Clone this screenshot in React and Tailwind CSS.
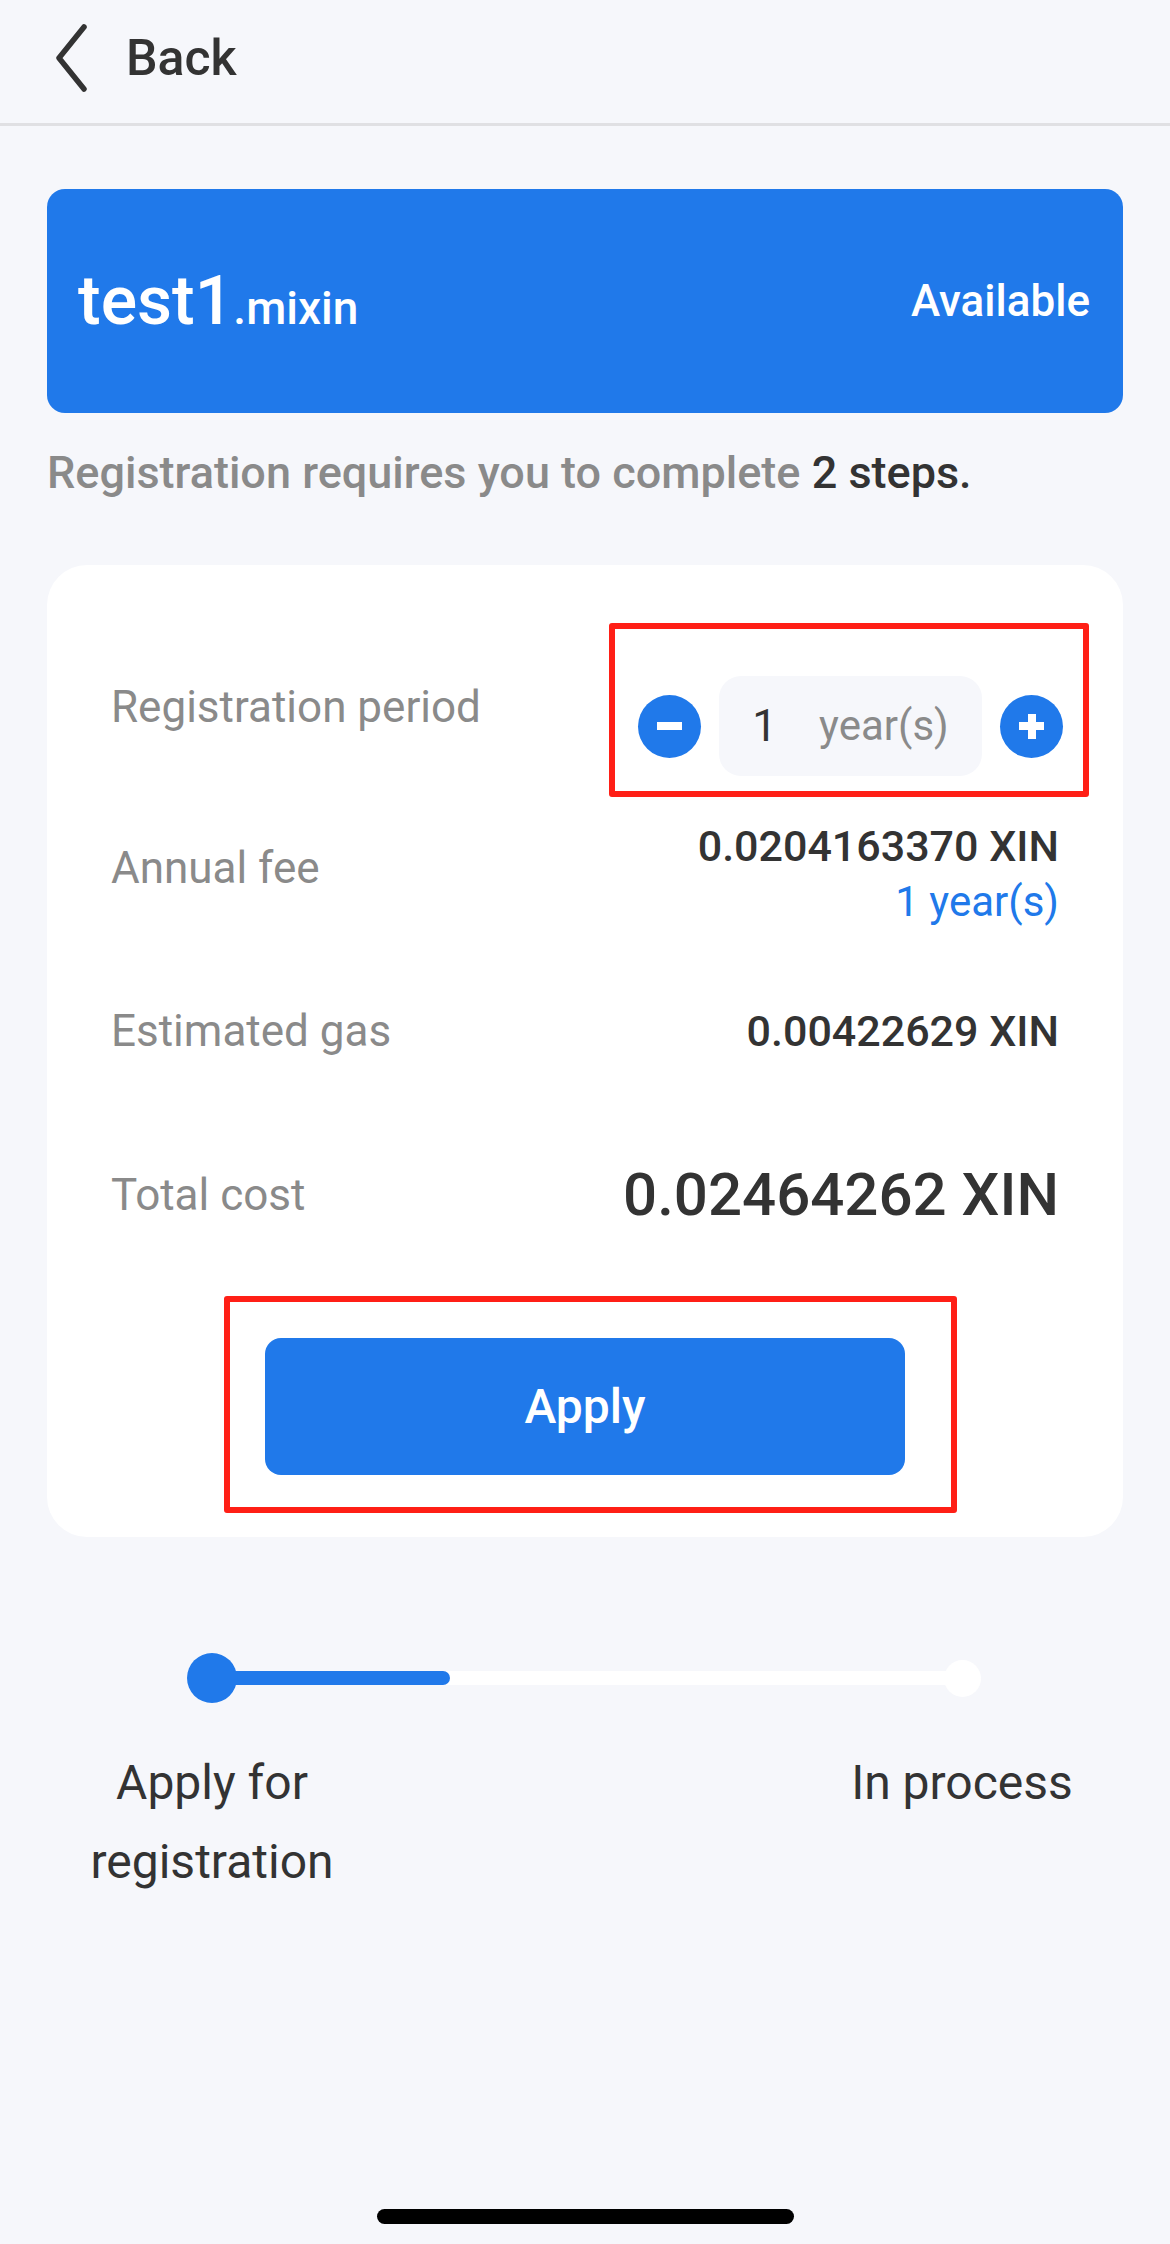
import React, { useState } from 'react';

const font = { fontFamily: 'Roboto, "Noto Sans", sans-serif' };

function Stepper({ years, setYears }) {
    return (
        <div className="relative flex items-center gap-[18px] mr-[-4px]">
            {/* annotation frame */}
            <div className="absolute top-[-53px] left-[-29px] right-[-26px] bottom-[-21px] border-[6px] border-[#ff1f16] rounded-[3px] pointer-events-none"></div>
            <button
                onClick={() => setYears(Math.max(1, years - 1))}
                className="w-[63px] h-[63px] rounded-full bg-[#2079ea] flex items-center justify-center"
            >
                <span className="block w-[25px] h-[8px] bg-white"></span>
            </button>
            <div className="w-[263px] h-[100px] rounded-[22px] bg-[#f6f7fb] flex items-center justify-center gap-[42px]">
                <span className="text-[44px] leading-none text-[#333]">{years}</span>
                <span className="text-[42px] leading-none text-[#8a8a8a]">year(s)</span>
            </div>
            <button
                onClick={() => setYears(years + 1)}
                className="relative w-[63px] h-[63px] rounded-full bg-[#2079ea] flex items-center justify-center"
            >
                <span className="block w-[25px] h-[8px] bg-white"></span>
                <span className="absolute block w-[8px] h-[25px] bg-white"></span>
            </button>
        </div>
    );
}

export default function App() {
    const [years, setYears] = useState(1);

    return (
        <div className="min-h-[2244px] w-[1170px] bg-[#f6f7fb] flex flex-col" style={font}>
            {/* Header */}
            <div className="h-[126px] border-b-[3px] border-[#e0e0e3] flex items-center pl-[54px] pb-[8px]">
                <svg width="36" height="68" viewBox="0 0 36 68" fill="none">
                    <path d="M30 3 L5 34 L30 65" stroke="#333" strokeWidth="5.5" strokeLinecap="round" strokeLinejoin="round" />
                </svg>
                <span className="ml-[36px] text-[50px] leading-none font-medium text-[#333]">Back</span>
            </div>

            {/* Name card */}
            <div className="mx-[47px] mt-[63px] h-[224px] rounded-[18px] bg-[#2079ea] flex items-center justify-between pl-[31px] pr-[33px]">
                <div className="flex items-baseline text-white font-medium">
                    <span className="text-[68px] leading-none">test1</span>
                    <span className="text-[46px] leading-none">.mixin</span>
                </div>
                <span className="text-[44px] leading-none font-medium text-white">Available</span>
            </div>

            <p className="mx-[47px] mt-[36px] text-[45px] leading-[48px] font-medium text-[#8a8a8a]">
                Registration requires you to complete <span className="text-[#333]">2 steps.</span>
            </p>

            {/* Fee card */}
            <div className="mx-[47px] mt-[68px] rounded-[40px] bg-white px-[64px] pt-[111px] pb-[62px]">
                <div className="flex justify-between items-start">
                    <span className="mt-[11px] text-[44px] leading-[40px] text-[#8a8a8a]">Registration period</span>
                    <Stepper years={years} setYears={setYears} />
                </div>

                <div className="mt-[46px] flex justify-between items-start">
                    <span className="mt-[22px] text-[44px] leading-[48px] text-[#8a8a8a]">Annual fee</span>
                    <div className="flex flex-col items-end">
                        <span className="text-[43px] leading-[48px] font-medium text-[#333]">0.0204163370 XIN</span>
                        <span className="mt-[8px] text-[42px] leading-[48px] text-[#2079ea]">{years} year(s)</span>
                    </div>
                </div>

                <div className="mt-[81px] flex justify-between items-center">
                    <span className="text-[44px] leading-[48px] text-[#8a8a8a]">Estimated gas</span>
                    <span className="text-[43px] leading-[48px] font-medium text-[#333]">0.00422629 XIN</span>
                </div>

                <div className="mt-[104px] flex justify-between items-center">
                    <span className="text-[44px] leading-[48px] text-[#8a8a8a]">Total cost</span>
                    <span className="text-[60px] leading-[72px] font-medium text-[#333]">0.02464262 XIN</span>
                </div>

                <div className="mt-[107px] flex justify-center">
                    <div className="relative">
                        <div className="absolute top-[-42px] left-[-41px] right-[-52px] bottom-[-38px] border-[6px] border-[#ff1f16] rounded-[3px] pointer-events-none"></div>
                        <button className="w-[640px] h-[137px] rounded-[16px] bg-[#2079ea] text-white text-[48px] font-medium">
                            Apply
                        </button>
                    </div>
                </div>
            </div>

            {/* Progress */}
            <div className="mt-[116px] ml-[187px] w-[794px] h-[50px] flex items-center">
                <div className="w-[50px] h-[50px] rounded-full bg-[#2079ea] shrink-0"></div>
                <div className="flex-1 h-[14px] bg-white ml-[-4px] mr-[-4px]">
                    <div className="w-[217px] h-full bg-[#2079ea] rounded-r-full"></div>
                </div>
                <div className="w-[37px] h-[37px] rounded-full bg-white shrink-0"></div>
            </div>
            <div className="mt-[40px] ml-[62px] w-[1050px] flex justify-between">
                <span className="w-[300px] text-center text-[48px] leading-[79px] text-[#333]">Apply for<br />registration</span>
                <span className="w-[300px] text-center text-[48px] leading-[79px] text-[#333]">In process</span>
            </div>

            {/* Home indicator */}
            <div className="mt-auto pb-[20px] flex justify-center">
                <div className="w-[417px] h-[15px] rounded-full bg-black"></div>
            </div>
        </div>
    );
}
